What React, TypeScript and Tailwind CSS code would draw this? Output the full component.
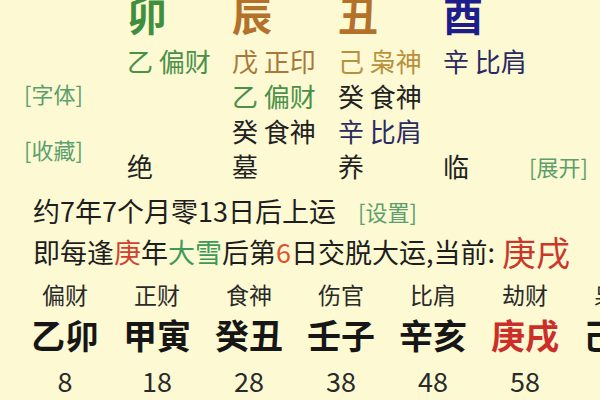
const font = { fontFamily: '"Noto Sans CJK SC", "Noto Sans", sans-serif' };

type Cell = { t: string; c: string };

const pillars: Cell[] = [
  { t: '卯', c: 'text-[#3f8f3f]' },
  { t: '辰', c: 'text-[#b4712c]' },
  { t: '丑', c: 'text-[#b4712c]' },
  { t: '酉', c: 'text-[#1d1d8c]' },
];

const hidden: (Cell | null)[][] = [
  [
    { t: '乙 偏财', c: 'text-[#4a9048]' },
    { t: '戊 正印', c: 'text-[#a8783a]' },
    { t: '己 枭神', c: 'text-[#b8913f]' },
    { t: '辛 比肩', c: 'text-[#2a2a62]' },
  ],
  [
    null,
    { t: '乙 偏财', c: 'text-[#4a9048]' },
    { t: '癸 食神', c: 'text-[#222]' },
    null,
  ],
  [
    null,
    { t: '癸 食神', c: 'text-[#222]' },
    { t: '辛 比肩', c: 'text-[#2a2a62]' },
    null,
  ],
];

const colW = ['w-[105px]', 'w-[106px]', 'w-[105px]', 'w-[86px]'];

const dayun = [
  { god: '偏财', gz: '乙卯', age: '8' },
  { god: '正财', gz: '甲寅', age: '18' },
  { god: '食神', gz: '癸丑', age: '28' },
  { god: '伤官', gz: '壬子', age: '38' },
  { god: '比肩', gz: '辛亥', age: '48' },
  { god: '劫财', gz: '庚戌', age: '58', red: true },
  { god: '枭神', gz: '己酉', age: '68' },
];

export default function App() {
  return (
    <div className="w-[600px] h-[400px] overflow-hidden bg-[#fcf9d3] text-[#1e1e1e]" style={font}>
      {/* top chart */}
      <div className="flex h-[184px]">
        <div className="w-[127px] shrink-0 flex flex-col items-start pl-[24px] pt-[80px] gap-[30px] text-[22px] leading-[26px] text-[#5c9f6e]">
          <span>[字体]</span>
          <span>[收藏]</span>
        </div>
        <div className="flex flex-col">
          <div className="flex h-[43px] text-[40px] leading-[28px] font-bold">
            {pillars.map((p, i) => (
              <div key={i} className={`${colW[i]} shrink-0 ${p.c}`}>{p.t}</div>
            ))}
          </div>
          {hidden.map((row, r) => (
            <div key={r} className="flex h-[35px] text-[26px] leading-[35px]">
              {row.map((cell, i) => (
                <div key={i} className={`${colW[i]} shrink-0 whitespace-nowrap ${cell ? cell.c : ''}`}>
                  {cell ? cell.t : ''}
                </div>
              ))}
            </div>
          ))}
          <div className="flex h-[36px] text-[26px] leading-[36px] text-[#222]">
            <div className="w-[105px] shrink-0">绝</div>
            <div className="w-[106px] shrink-0">墓</div>
            <div className="w-[105px] shrink-0">养</div>
            <div className="w-[86px] shrink-0">临</div>
            <div className="text-[22px] text-[#5c9f6e] whitespace-nowrap">[展开]</div>
          </div>
        </div>
      </div>

      {/* start of luck */}
      <div className="flex items-center h-[40px] mt-[7px] pl-[33px] whitespace-nowrap">
        <span className="text-[27px] leading-[40px]">约7年7个月零13日后上运</span>
        <span className="ml-[22px] text-[22px] text-[#5c9f6e]">[设置]</span>
      </div>
      <div className="flex items-center h-[40px] mt-[1px] pl-[33px] whitespace-nowrap text-[27px] leading-[40px]">
        <span>即每逢</span>
        <span className="text-[#d2412e]">庚</span>
        <span>年</span>
        <span className="text-[#3e9a5a]">大雪</span>
        <span>后第</span>
        <span className="text-[#e0502e]">6</span>
        <span>日交脱大运,当前: </span>
        <span className="ml-[7px] text-[34px] text-[#c8392b]">庚戌</span>
      </div>

      {/* da yun */}
      <div className="flex pl-[19px] mt-[7px] whitespace-nowrap">
        {dayun.map((d, i) => (
          <div key={i} className="w-[92px] shrink-0 flex flex-col items-center">
            <div className="h-[30px] text-[23px] leading-[30px] text-[#2a2a2a]">{d.god}</div>
            <div className={`h-[40px] mt-[6px] text-[34px] leading-[40px] font-bold ${d.red ? 'text-[#cc2f2a]' : 'text-[#161616]'}`}>
              {d.gz}
            </div>
            <div className="h-[30px] mt-[11px] text-[27px] leading-[30px] text-[#2a2a2a]">{d.age}</div>
          </div>
        ))}
      </div>
    </div>
  );
}
